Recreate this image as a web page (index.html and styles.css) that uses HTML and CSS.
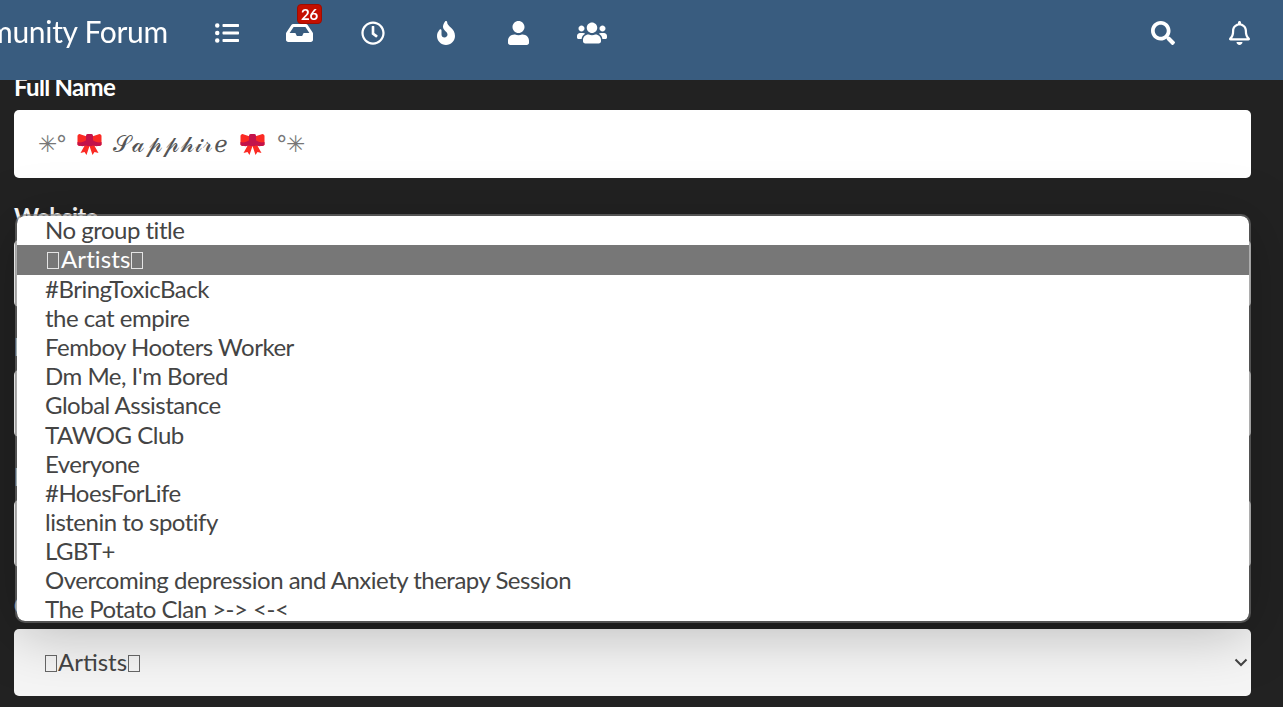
FILE: index.html
```html
<!DOCTYPE html>
<html lang="en">
<head>
    <meta charset="UTF-8">
    <meta name="viewport" content="width=device-width, initial-scale=1.0">
    <title>Edit Profile | Community Forum</title>
    <link rel="stylesheet" href="styles.css">
</head>
<body>
    <svg class="defs" aria-hidden="true">
        <symbol id="bow" viewBox="0 0 24 22">
            <path fill="#fb2a24" d="M2 1l9 3v8l-9 1c-1 0-2-1-2-2V3c0-1 1-2 2-2zM22 1l-9 3v8l9 1c1 0 2-1 2-2V3c0-1-1-2-2-2z"/>
            <path fill="#fb2a24" d="M8 11 3 20l4-1 2 3 3-9zM16 11l5 9-4-1-2 3-3-9z"/>
            <path fill="#c2134b" d="M0 9c3 1 6 0 9-2h6c3 2 6 3 9 2v3c-4 2-8 1-9 0H9c-1 1-5 2-9 0z"/>
            <rect fill="#c2134b" x="8.500" y="1" width="7" height="12" rx="1.500"/>
        </symbol>
    </svg>

    <header class="topbar">
        <a class="brand">Community Forum</a>
        <nav class="nav">
            <a class="nav-item">
                <svg class="icon" width="24" height="24" viewBox="0 0 512 512"><path d="M48 48a48 48 0 1 0 48 48 48 48 0 0 0-48-48zm0 160a48 48 0 1 0 48 48 48 48 0 0 0-48-48zm0 160a48 48 0 1 0 48 48 48 48 0 0 0-48-48zm448 16H176a16 16 0 0 0-16 16v32a16 16 0 0 0 16 16h320a16 16 0 0 0 16-16v-32a16 16 0 0 0-16-16zm0-320H176a16 16 0 0 0-16 16v32a16 16 0 0 0 16 16h320a16 16 0 0 0 16-16V80a16 16 0 0 0-16-16zm0 160H176a16 16 0 0 0-16 16v32a16 16 0 0 0 16 16h320a16 16 0 0 0 16-16v-32a16 16 0 0 0-16-16z"/></svg>
            </a>
            <a class="nav-item">
                <svg class="icon" width="27" height="24" viewBox="0 0 576 512"><path d="M567.938 243.908L462.250 85.374A48.003 48.003 0 0 0 422.311 64H153.689a48 48 0 0 0-39.938 21.374L8.062 243.908A47.994 47.994 0 0 0 0 270.533V400c0 26.510 21.490 48 48 48h480c26.510 0 48-21.490 48-48V270.533a47.994 47.994 0 0 0-8.062-26.625zM162.252 128h251.497l85.333 128H376l-32 64H232l-32-64H76.918l85.334-128z"/></svg>
                <span class="badge">26</span>
            </a>
            <a class="nav-item">
                <svg class="icon" width="24" height="24" viewBox="0 0 512 512"><path d="M256 8C119 8 8 119 8 256s111 248 248 248 248-111 248-248S393 8 256 8zm0 448c-110.500 0-200-89.500-200-200S145.500 56 256 56s200 89.500 200 200-89.500 200-200 200zm61.800-104.400l-84.900-61.700c-3.100-2.300-4.900-5.900-4.900-9.700V116c0-6.600 5.400-12 12-12h32c6.600 0 12 5.400 12 12v141.700l66.800 48.600c5.400 3.900 6.500 11.400 2.600 16.800L334.600 349c-3.900 5.300-11.400 6.500-16.800 2.600z"/></svg>
            </a>
            <a class="nav-item">
                <svg class="icon" width="18" height="24" viewBox="0 0 384 512"><path d="M216 23.858c0-23.802-30.653-32.765-44.149-13.038C48 191.851 224 200 224 288c0 35.629-29.114 64.458-64.850 63.994C123.980 351.538 96 322.220 96 287.046v-85.510c0-21.703-26.471-32.225-41.432-16.504C27.801 213.158 0 261.332 0 320c0 105.869 86.131 192 192 192s192-86.131 192-192c0-170.290-168-193.003-168-296.142z"/></svg>
            </a>
            <a class="nav-item">
                <svg class="icon" width="21" height="24" viewBox="0 0 448 512"><path d="M224 256c70.700 0 128-57.300 128-128S294.700 0 224 0 96 57.300 96 128s57.300 128 128 128zm89.600 32h-16.700c-22.200 10.200-46.900 16-72.900 16s-50.600-5.800-72.900-16h-16.700C60.200 288 0 348.200 0 422.400V464c0 26.500 21.500 48 48 48h352c26.500 0 48-21.500 48-48v-41.600c0-74.200-60.200-134.400-134.400-134.400z"/></svg>
            </a>
            <a class="nav-item">
                <svg class="icon" width="30" height="24" viewBox="0 0 640 512"><path d="M96 224c35.300 0 64-28.700 64-64s-28.700-64-64-64-64 28.700-64 64 28.700 64 64 64zm448 0c35.300 0 64-28.700 64-64s-28.700-64-64-64-64 28.700-64 64 28.700 64 64 64zm32 32h-64c-17.600 0-33.500 7.100-45.100 18.600 40.300 22.100 68.900 62 75.100 109.400h66c17.700 0 32-14.300 32-32v-32c0-35.300-28.700-64-64-64zm-256 0c61.900 0 112-50.100 112-112S381.900 32 320 32 208 82.100 208 144s50.100 112 112 112zm76.800 32h-8.300c-20.800 10-43.900 16-68.500 16s-47.600-6-68.500-16h-8.300C179.600 288 128 339.600 128 403.200V432c0 26.500 21.500 48 48 48h288c26.500 0 48-21.500 48-48v-28.800c0-63.600-51.600-115.200-115.200-115.200zm-223.700-13.400C161.500 263.100 145.600 256 128 256H64c-35.300 0-64 28.700-64 64v32c0 17.700 14.300 32 32 32h65.900c6.300-47.400 34.900-87.300 75.200-109.400z"/></svg>
            </a>
        </nav>
        <nav class="nav nav-right">
            <a class="nav-item">
                <svg class="icon" width="24" height="24" viewBox="0 0 512 512"><path d="M505 442.700L405.300 343c-4.500-4.500-10.600-7-17-7H372c27.600-35.300 44-79.700 44-128C416 93.100 322.900 0 208 0S0 93.100 0 208s93.100 208 208 208c48.300 0 92.700-16.400 128-44v16.300c0 6.400 2.500 12.500 7 17l99.700 99.700c9.400 9.400 24.600 9.400 33.900 0l28.300-28.300c9.400-9.400 9.400-24.600.1-34zM208 336c-70.700 0-128-57.200-128-128 0-70.700 57.200-128 128-128 70.700 0 128 57.200 128 128 0 70.700-57.200 128-128 128z"/></svg>
            </a>
            <a class="nav-item">
                <svg class="icon" width="21" height="24" viewBox="0 0 448 512"><path d="M439.390 362.290c-19.320-20.760-55.470-51.990-55.470-154.290 0-77.700-54.480-139.900-127.940-155.160V32c0-17.670-14.320-32-31.980-32s-31.980 14.330-31.980 32v20.840C118.560 68.100 64.080 130.300 64.080 208c0 102.300-36.150 133.530-55.470 154.290-6 6.450-8.660 14.160-8.610 21.710.11 16.400 12.980 32 32.100 32h383.800c19.120 0 32-15.600 32.100-32 .05-7.550-2.610-15.270-8.610-21.710zM67.530 368c21.220-27.970 44.420-74.330 44.530-159.420 0-.2-.06-.38-.06-.58 0-61.860 50.140-112 112-112s112 50.140 112 112c0 .2-.06.38-.06.58.11 85.100 23.310 131.460 44.530 159.420H67.530zM224 512c35.320 0 63.970-28.650 63.970-64H160.030c0 35.350 28.650 64 63.970 64z"/></svg>
            </a>
        </nav>
    </header>

    <main class="form">
        <div class="group">
            <label class="group-label">Full Name</label>
            <div class="field field-name">
                <span class="star">✳°</span>
                <svg class="bow" width="25" height="22"><use href="#bow"/></svg>
                <span class="script">𝒮𝒶𝓅𝓅𝒽𝒾𝓇ℯ</span>
                <svg class="bow" width="25" height="22"><use href="#bow"/></svg>
                <span class="star">°✳</span>
            </div>
        </div>
        <div class="group">
            <label class="group-label">Website</label>
            <div class="field"></div>
        </div>
        <div class="group">
            <label class="group-label">Location</label>
            <div class="field"></div>
        </div>
        <div class="group group-tight">
            <label class="group-label">Birthday</label>
            <div class="field"></div>
        </div>
        <div class="group">
            <label class="group-label">Group Title</label>
            <div class="field field-select">
                <span><span class="tofu"></span>Artists<span class="tofu"></span></span>
                <svg class="chevron" width="14" height="9" viewBox="0 0 14 9"><path d="M1.500 1.500 7 7l5.500-5.500" fill="none" stroke="#444" stroke-width="2"/></svg>
            </div>
        </div>
    </main>

    <!-- open select list -->
    <ul class="dropdown">
        <li>No group title</li>
        <li class="active"><span class="tofu"></span>Artists<span class="tofu"></span></li>
        <li>#BringToxicBack</li>
        <li>the cat empire</li>
        <li>Femboy Hooters Worker</li>
        <li>Dm Me, I'm Bored</li>
        <li>Global Assistance</li>
        <li>TAWOG Club</li>
        <li>Everyone</li>
        <li>#HoesForLife</li>
        <li>listenin to spotify</li>
        <li>LGBT+</li>
        <li>Overcoming depression and Anxiety therapy Session</li>
        <li>The Potato Clan &gt;-&gt; &lt;-&lt;</li>
    </ul>
</body>
</html>
```

FILE: styles.css
```css
html {
    overflow: hidden;
}
body {
    margin: 0;
    height: 707px;
    overflow: hidden;
    background-color: #222;
    color: #444;
    font-family: Lato, "Noto Sans", sans-serif;
}
.defs {
    display: none;
}

/* top bar */
.topbar {
    position: fixed;
    top: 0;
    left: 0;
    right: 0;
    z-index: 2;
    height: 66px;
    padding-bottom: 14px;
    display: flex;
    align-items: center;
    background-color: #395c7f;
    color: #fff;
}
.brand {
    flex: none;
    width: 239.500px;
    margin-left: -72.500px;
    padding-bottom: 4px;
    font-size: 30px;
    letter-spacing: -0.3px;
    white-space: nowrap;
}
.nav {
    display: flex;
    margin-left: 23px;
}
.nav-right {
    margin-left: auto;
    margin-right: 5px;
}
.nav-item {
    position: relative;
    width: 73px;
    height: 24px;
    display: flex;
    justify-content: center;
    align-items: center;
}
.nav-right .nav-item {
    width: 77px;
}
.icon {
    fill: #fff;
}
.badge {
    position: absolute;
    top: -17px;
    left: 34px;
    width: 25px;
    height: 20px;
    line-height: 18px;
    text-align: center;
    font-size: 15px;
    font-weight: 700;
    letter-spacing: -0.3px;
    color: #fff;
    background-color: #c40f00;
    border: 1px solid #9e0c00;
    border-radius: 4px;
    box-sizing: border-box;
}

/* form */
.form {
    padding: 74px 32px 0 14px;
}
.group {
    margin-bottom: 27px;
}
.group-tight {
    margin-bottom: 26px;
}
.group-label {
    display: block;
    height: 26px;
    line-height: 26px;
    margin-bottom: 10px;
    font-size: 24px;
    font-weight: 700;
    letter-spacing: -0.7px;
    color: #fff;
}
.field {
    height: 67px;
    box-sizing: border-box;
    padding: 0 24px;
    display: flex;
    align-items: center;
    gap: 11px;
    background-color: #fff;
    border-radius: 5px;
}
.field-name {
    height: 68px;
    margin-bottom: -1px;
    font-family: "DejaVu Sans", sans-serif;
    font-size: 22px;
    color: #666;
}
.star {
    font-size: 23px;
    letter-spacing: -1.500px;
    color: #777;
}
.script {
    font-family: "DejaVu Serif", "DejaVu Sans", serif;
    font-size: 23px;
    letter-spacing: 1.200px;
    color: #555;
}
.bow {
    flex: none;
}
.field-select {
    padding: 0 3px 2px 30px;
    justify-content: space-between;
    font-size: 24px;
    background-color: #f5f5f5;
}
.field-select .chevron {
    margin-top: 2px;
}
.tofu {
    display: inline-block;
    width: 12px;
    height: 17px;
    margin: 0 1px;
    border: 1px solid currentColor;
    box-sizing: border-box;
    vertical-align: -1px;
    opacity: 0.8;
}

/* open select list */
.dropdown {
    position: absolute;
    top: 214px;
    left: 15px;
    width: 1232px;
    height: 405px;
    margin: 0;
    padding: 0;
    list-style: none;
    overflow: hidden;
    background-color: #fff;
    background-clip: padding-box;
    border: 2px solid rgba(118, 118, 118, 0.6);
    border-radius: 10px;
    box-shadow: 0 10px 60px rgba(0, 0, 0, 0.25);
    font-size: 24px;
    letter-spacing: -0.5px;
    line-height: 28.080px;
}
.dropdown li {
    padding: 0 0 1px 28px;
    white-space: nowrap;
}
.dropdown .active {
    padding: 0 0 2px 29px;
    letter-spacing: 0.1px;
    background-color: #777;
    color: #fff;
}
.dropdown .active .tofu {
    margin: 0 2px 0 1px;
}
```
